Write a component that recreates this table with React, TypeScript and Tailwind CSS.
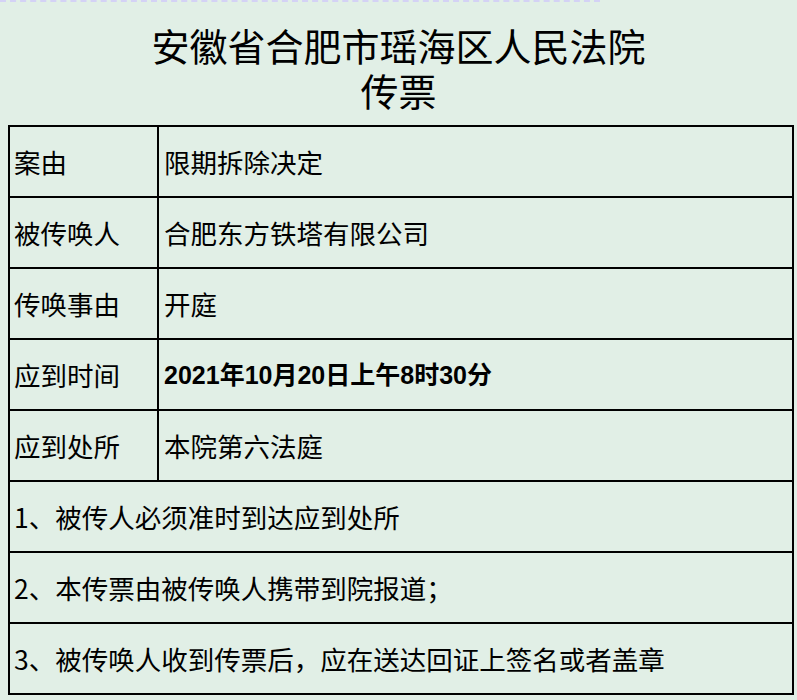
const rows: [string, string][] = [
  ["案由", "限期拆除决定"],
  ["被传唤人", "合肥东方铁塔有限公司"],
  ["传唤事由", "开庭"],
  ["应到时间", ""],
  ["应到处所", "本院第六法庭"],
];

const notes = [
  "1、被传人必须准时到达应到处所",
  "2、本传票由被传唤人携带到院报道；",
  "3、被传唤人收到传票后，应在送达回证上签名或者盖章",
];

const cjk = "font-['Noto_Sans_CJK_SC',sans-serif]";
const latin = "font-['Liberation_Sans','Noto_Sans_CJK_SC',sans-serif]";

export default function App() {
  return (
    <div className={`h-[700px] w-full overflow-hidden bg-[#e1efe6] text-black ${cjk}`}>
      <div className="border-t-2 border-dashed border-[#d4d2f5] w-[600px] h-0" />
      <div className="pt-[20px] h-[123px] text-center text-[38px] leading-[45px]">
        <div>安徽省合肥市瑶海区人民法院</div>
        <div>传票</div>
      </div>

      <div className="ml-[8px] w-[786px] border-l-2 border-t-2 border-black text-[26.5px]">
        {rows.map(([label, value]) => (
          <div key={label} className="flex h-[71px]">
            <div className="w-[149px] shrink-0 flex items-center pl-[4px] border-r-2 border-b-2 border-black">
              {label}
            </div>
            <div className="flex-1 flex items-center pl-[5px] border-r-2 border-b-2 border-black">
              {value ? (
                value
              ) : (
                <span className="font-bold text-[25px]">
                  <span className={latin}>2021</span>年
                  <span className={latin}>10</span>月
                  <span className={latin}>20</span>日上午
                  <span className={latin}>8</span>时
                  <span className={latin}>30</span>分
                </span>
              )}
            </div>
          </div>
        ))}
        {notes.map((n) => (
          <div key={n} className="h-[71px] flex items-center pl-[4px] border-r-2 border-b-2 border-black">
            {n}
          </div>
        ))}
      </div>
    </div>
  );
}
